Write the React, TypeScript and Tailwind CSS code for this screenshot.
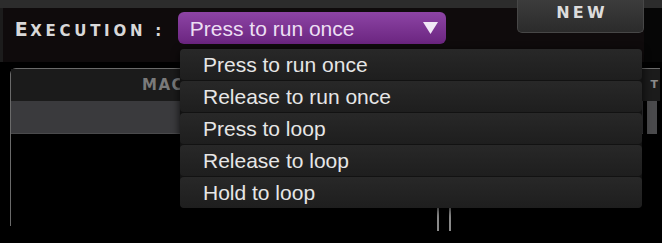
import React from 'react';

const options = ['Press to run once', 'Release to run once', 'Press to loop', 'Release to loop', 'Hold to loop'];

const App: React.FC = () => {
  return (
    <div className="relative w-[662px] h-[243px] overflow-hidden bg-black font-['Liberation_Sans',Arial,sans-serif]">
      {/* header strip */}
      <div className="flex h-[62px] border-t-[8px] border-[#2c2c2c] bg-[#0f0b0c]">
        <div className="w-[3px] bg-[#1c1c1c]" />
        <div className="flex items-start flex-1">
          <span className="ml-[12px] mt-[12px] w-[152px] whitespace-nowrap font-['DejaVu_Sans',sans-serif] font-bold text-[#d8d8d8] leading-none">
            <span className="text-[19px] tracking-[0.12em]">E</span>
            <span className="text-[15px] tracking-[0.25em]">XECUTION :</span>
          </span>
          <div className="ml-[11px] mt-[4px] w-[268px] h-[32px] rounded-[6px] bg-gradient-to-b from-[#8d44a5] to-[#6b2580] flex items-center justify-between pl-[12px] pr-[8px]">
            <span className="text-[21px] text-[#ecdff3] leading-none">Press to run once</span>
            <svg width="15" height="12" viewBox="0 0 15 12">
              <polygon points="0,0 15,0 7.5,12" fill="#f1e8f6" />
            </svg>
          </div>
          <div className="ml-[71px] -mt-[8px] w-[127px] h-[33px] rounded-b-[5px] border border-t-0 border-[#474747] bg-gradient-to-b from-[#3c3c3c] to-[#2b2b2b] flex justify-center pt-[5px]">
            <span className="font-['DejaVu_Sans',sans-serif] font-bold text-[16px] tracking-[0.2em] pl-[0.2em] text-[#dcdcdc] leading-none">NEW</span>
          </div>
        </div>
        <div className="w-[19px] bg-[#060606]" />
      </div>

      {/* list panel */}
      <div className="relative ml-[10px] mt-[6px] w-[650px] h-[158px] rounded-tl-[6px] border-l border-t border-[#6a6a6a] flex flex-col">
        <div className="h-[32px] bg-[#1b1b1b] flex items-center justify-between">
          <span className="ml-[131px] font-['DejaVu_Sans',sans-serif] font-bold text-[15px] tracking-[0.1em] text-[#7a7a7a]">MACRO</span>
          <span className="mr-[2px] font-['DejaVu_Sans',sans-serif] font-bold text-[11px] text-[#8a8a8a]">T</span>
        </div>
        <div className="h-[33px] flex">
          <div className="flex-1 bg-[#3a3a3d] border-b border-[#4a4a4c]" />
          <div className="w-[4px] bg-black" />
          <div className="w-[10px] bg-[#4a4a4c]" />
          <div className="w-[3px] bg-black" />
        </div>
        <div className="flex-1 bg-black" />
        <div className="absolute left-[426px] top-[137px] flex gap-[10px]">
          <div className="w-[2px] h-[25px] bg-[#8a8a8a]" />
          <div className="w-[2px] h-[25px] bg-[#8a8a8a]" />
        </div>
      </div>

      {/* open dropdown menu */}
      <div className="absolute left-[180px] top-[49px] w-[462px] flex flex-col gap-[1px] bg-[#121212] rounded-[5px] shadow-[0_2px_8px_rgba(0,0,0,0.8)]">
        {options.map(o => (
          <div key={o} className="h-[31px] rounded-[4px] bg-gradient-to-b from-[#282828] to-[#1e1e1e] flex items-center pl-[23px]">
            <span className="text-[21px] text-[#e6e6e6] leading-none">{o}</span>
          </div>
        ))}
      </div>
    </div>
  );
};

export default App;
